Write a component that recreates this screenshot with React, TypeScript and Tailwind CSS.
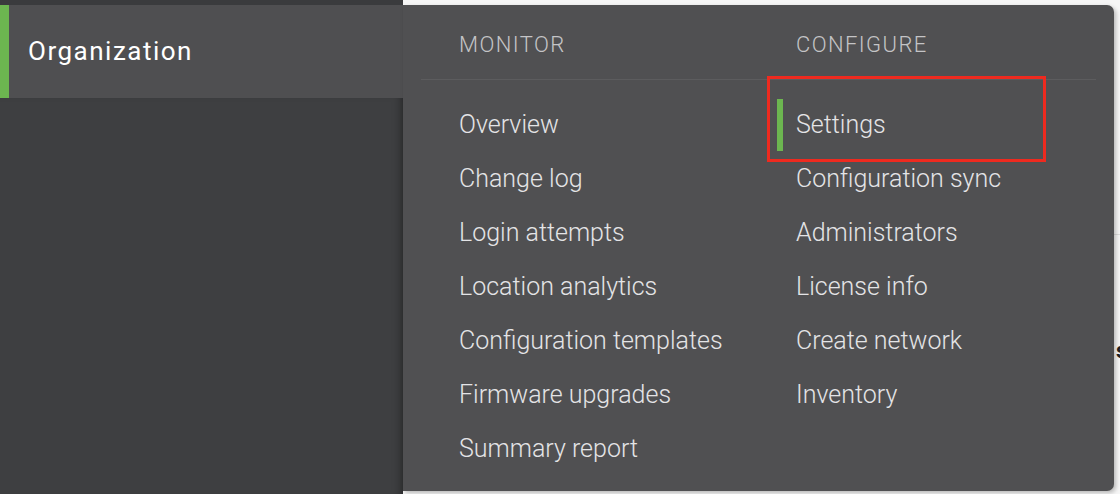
import React from "react";

const monitor = [
  "Overview",
  "Change log",
  "Login attempts",
  "Location analytics",
  "Configuration templates",
  "Firmware upgrades",
  "Summary report",
];
const configure = [
  "Settings",
  "Configuration sync",
  "Administrators",
  "License info",
  "Create network",
  "Inventory",
];

export default function App() {
  return (
    <div
      className="relative flex h-[494px] w-[1120px] overflow-hidden bg-[#f6f6f6]"
      style={{ fontFamily: "Roboto, 'Liberation Sans', sans-serif" }}
    >
      <span className="absolute left-[1116px] top-[334px] text-[22px] font-bold text-[#222]">s</span>
      <div className="absolute left-[1114px] top-[234px] h-px w-[10px] bg-[#dddddd]" />
      <aside className="flex w-[403px] shrink-0 flex-col bg-[#3e3f41]">
        <div className="h-[5px] bg-[#3a3b3d]" />
        <div className="flex h-[93px] items-center bg-[#4f4f51]">
          <div className="h-full w-[9px] bg-[#6cb650]" />
          <span className="pl-[19px] text-[26px] font-normal tracking-[1.5px] text-white">Organization</span>
        </div>
        <div className="flex-1 bg-[#3e3f41] shadow-[inset_-8px_0_8px_-6px_rgba(0,0,0,0.35)]" />
      </aside>
      <div className="relative z-10 mt-[5px] h-[486px] w-[711px] rounded-r-[7px] bg-[#505052] shadow-[2px_2px_4px_rgba(0,0,0,0.25)]">
        <div className="flex h-[74px] items-center pl-[56px] pt-[4px] text-[22px] font-light tracking-[1.4px] text-[#c4c4c6]">
          <div className="w-[337px]">MONITOR</div>
          <div>CONFIGURE</div>
        </div>
        <div className="mx-[18px] h-px bg-[#5c5c5e]" />
        <div className="flex pl-[56px] pt-[18px] text-[25px] font-light text-[#e4e4e6]">
          <div className="flex w-[337px] flex-col">
            {monitor.map((m) => (
              <div key={m} className="flex h-[54px] items-center">
                {m}
              </div>
            ))}
          </div>
          <div className="flex flex-col">
            {configure.map((c, i) => (
              <div key={c} className="relative flex h-[54px] items-center">
                {i === 0 && (
                  <>
                    <div className="absolute left-[-19px] top-[1px] h-[52px] w-[6px] bg-[#6cb650]" />
                    <div className="absolute left-[-29px] top-[-22px] h-[86px] w-[279px] border-[3px] border-[#ee2a1f]" />
                  </>
                )}
                {c}
              </div>
            ))}
          </div>
        </div>
      </div>
    </div>
  );
}
